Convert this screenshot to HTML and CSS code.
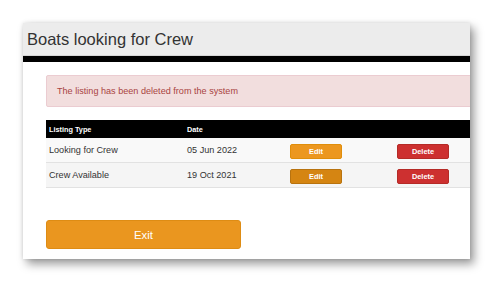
FILE: index.html
```html
<!DOCTYPE html>
<html lang="en">

<head>
    <meta charset="UTF-8">
    <meta name="viewport" content="width=device-width, initial-scale=1.0">
    <title>Boats looking for Crew</title>
    <link rel="stylesheet" href="styles.css">
</head>

<body>
    <div class="window">
        <div class="window-header">
            <h1>Boats looking for Crew</h1>
        </div>
        <div class="window-bar"></div>

        <div class="window-body">
            <div class="alert">The listing has been deleted from the system</div>

            <table class="listings">
                <thead>
                    <tr>
                        <th class="col-type">Listing Type</th>
                        <th class="col-date">Date</th>
                        <th class="col-edit"></th>
                        <th class="col-delete"></th>
                    </tr>
                </thead>
                <tbody>
                    <tr>
                        <td>Looking for Crew</td>
                        <td>05 Jun 2022</td>
                        <td><button class="btn-small btn-edit">Edit</button></td>
                        <td><button class="btn-small btn-delete">Delete</button></td>
                    </tr>
                    <tr>
                        <td>Crew Available</td>
                        <td>19 Oct 2021</td>
                        <td><button class="btn-small btn-edit active">Edit</button></td>
                        <td><button class="btn-small btn-delete">Delete</button></td>
                    </tr>
                </tbody>
            </table>

            <button class="btn-exit">Exit</button>
        </div>
    </div>
</body>

</html>
```

FILE: styles.css
```css
body {
    font-family: "Liberation Sans", Arial, sans-serif;
    margin: 0;
    padding: 23px;
    background-color: #fff;
}

.window {
    width: 447px;
    height: 236px;
    background: white;
    overflow: hidden;
    box-shadow: 4px 5px 9px rgba(0, 0, 0, 0.4), 0 0 4px rgba(0, 0, 0, 0.12);
}

.window-header {
    height: 32px;
    background: #ececec;
    border-bottom: 1px solid #d6d6d6;
    display: flex;
    align-items: center;
    padding-left: 4px;
}

.window-header h1 {
    margin: 0;
    font-size: 16.5px;
    font-weight: normal;
    color: #333;
}

.window-bar {
    height: 6px;
    background: black;
}

.window-body {
    width: 470px;
    padding: 13px 0 0 23px;
}

.alert {
    height: 30px;
    display: flex;
    align-items: center;
    padding-left: 10px;
    background: #f2dede;
    border: 1px solid #ebccd1;
    border-radius: 2px;
    color: #a94442;
    font-size: 9.1px;
}

.listings {
    width: 447px;
    margin-top: 13px;
    border-collapse: collapse;
    table-layout: fixed;
    font-size: 9.1px;
    color: #333;
}

.listings th {
    height: 18px;
    padding: 0 3px;
    background: black;
    color: white;
    font-size: 7.3px;
    text-align: left;
}

.col-type {
    width: 132px;
}

.col-date {
    width: 97px;
}

.col-edit {
    width: 101px;
}

.listings td {
    height: 24px;
    padding: 0 3px;
    border-bottom: 1px solid #e2e2e2;
    background: #f9f9f9;
}

.listings tbody tr:nth-child(2) td {
    background: #f5f5f5;
}

.btn-small {
    width: 52px;
    height: 15px;
    margin-top: 2px;
    padding: 0;
    border-radius: 2px;
    color: white;
    font-family: "Liberation Sans", Arial, sans-serif;
    font-size: 7.4px;
    font-weight: bold;
    display: block;
}

.btn-edit {
    background: #ec971f;
    border: 1px solid #e08e0b;
}

.btn-edit.active {
    background: #d58512;
    border-color: #b8730f;
}

.btn-delete {
    background: #cd3030;
    border: 1px solid #b52b27;
}

.btn-exit {
    display: block;
    width: 195px;
    height: 29px;
    margin-top: 32px;
    background: #ea961f;
    border: 1px solid #de8c14;
    border-radius: 3px;
    color: #fff;
    font-family: "Liberation Sans", Arial, sans-serif;
    font-size: 11.4px;
}
```
